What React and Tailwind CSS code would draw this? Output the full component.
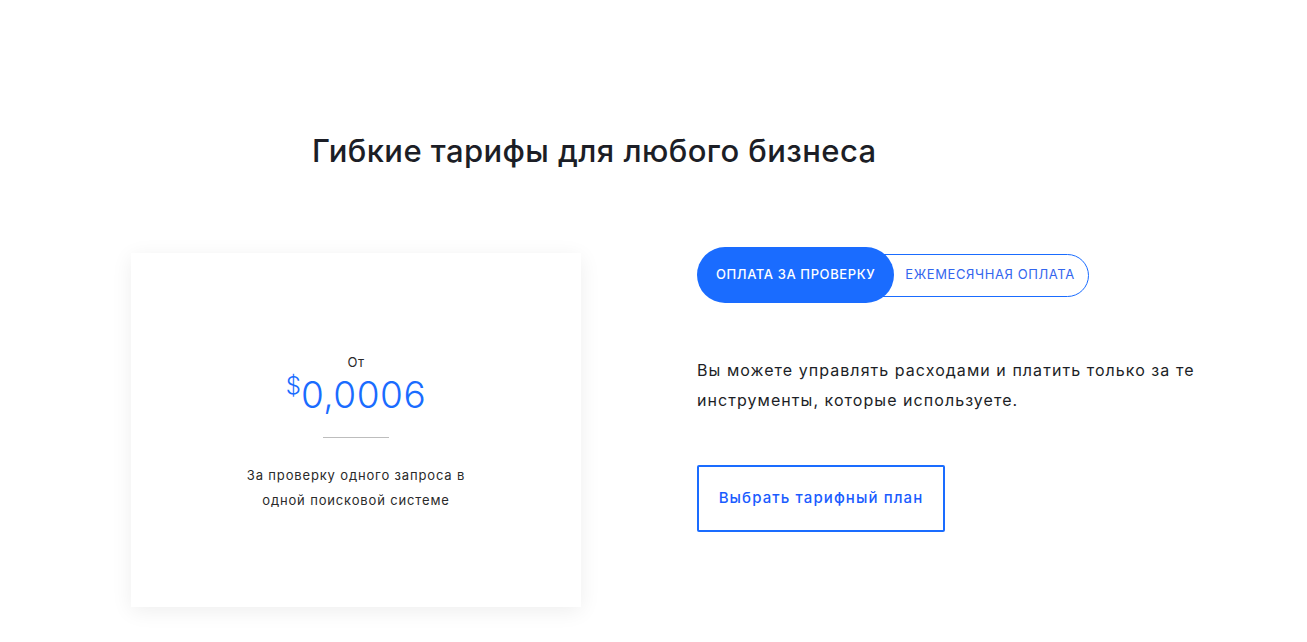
export default function App() {
  return (
    <div className="min-h-screen bg-white font-['Inter','Noto_Sans',sans-serif] text-[#1c1e26]">
      <div className="pt-[131px]">
        <h2 className="pl-[312px] text-[31px] leading-[40px] font-medium tracking-[0.42px]">
          Гибкие тарифы для любого бизнеса
        </h2>

        <div className="mt-[76px] flex items-start">
          <div className="ml-[131px] mt-[6px] flex h-[354px] w-[450px] flex-col items-center justify-center bg-white pt-[6px] shadow-[0_4px_20px_rgba(0,0,0,0.07)]">
            <p className="text-[13px] leading-[18px] tracking-[0.5px] text-[#2a2a2a]">От</p>
            <div className="mt-[2px] flex items-start text-[#1a6cff]">
              <span className="mt-[1px] text-[24px] leading-[24px] font-light">$</span>
              <span className="text-[37px] leading-[44px] font-light tracking-[0.5px]">0,0006</span>
            </div>
            <div className="mt-[20px] h-px w-[66px] bg-[#bdbdbd]" />
            <p className="mt-[25px] text-center text-[13px] leading-[25px] tracking-[0.85px] text-[#2a2a2a]">
              За проверку одного запроса в
              <br />
              одной поисковой системе
            </p>
          </div>

          <div className="ml-[116px] flex flex-col items-start">
            <div className="flex items-center">
              <button className="relative z-10 flex h-[56px] items-center rounded-full bg-[#1a6cff] px-[19px] text-[13px] font-medium tracking-[0.6px] text-white">
                ОПЛАТА ЗА ПРОВЕРКУ
              </button>
              <button className="-ml-[20px] flex h-[43px] items-center rounded-r-full border border-[#1a6cff] pl-[30px] pr-[13px] text-[13px] tracking-[0.6px] text-[#3366ee]">
                ЕЖЕМЕСЯЧНАЯ ОПЛАТА
              </button>
            </div>

            <p className="mt-[52px] text-[16px] leading-[30px] tracking-[1.05px] text-[#1c1e26]">
              Вы можете управлять расходами и платить только за те
              <br />
              инструменты, которые используете.
            </p>

            <button className="mt-[50px] flex h-[67px] w-[248px] items-center justify-center rounded-[2px] border-2 border-[#1a6cff] text-[15px] font-medium tracking-[1.1px] text-[#1a5cff]">
              Выбрать тарифный план
            </button>
          </div>
        </div>
      </div>
    </div>
  )
}
